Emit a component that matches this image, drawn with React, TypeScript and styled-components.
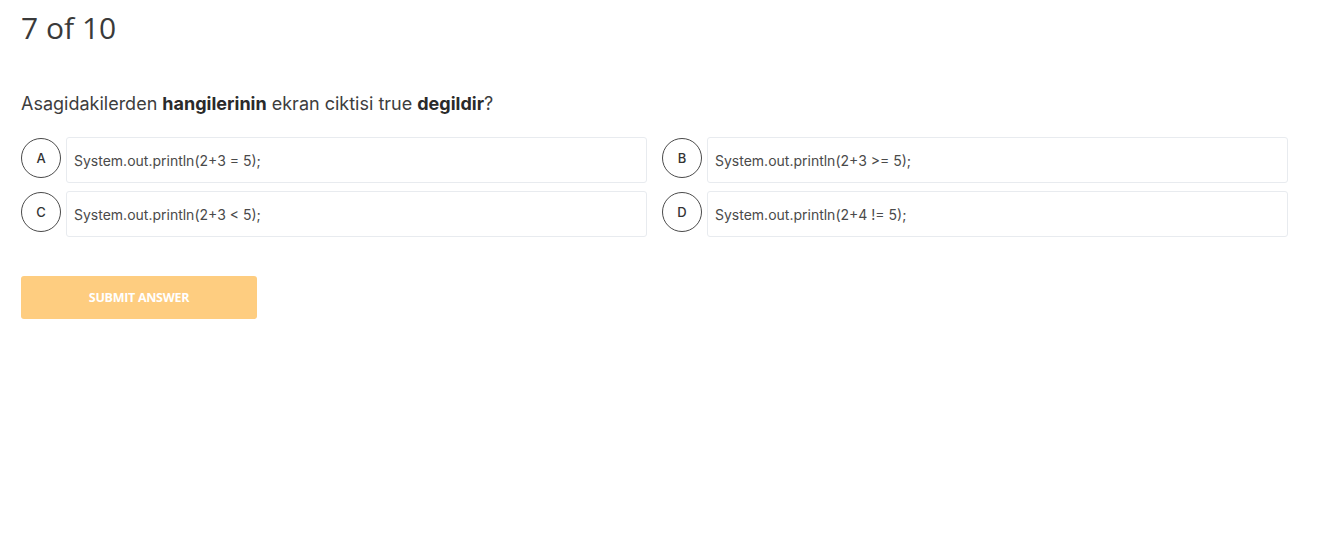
import styled, { createGlobalStyle } from "styled-components";

const GlobalStyle = createGlobalStyle`
  html, body {
    margin: 0;
    padding: 0;
    background: #ffffff;
  }
  body {
    font-family: Inter, "Noto Sans", sans-serif;
    color: #333;
  }
`;

const Page = styled.div`
  padding: 8px 51px 0 21px;
`;

const Counter = styled.h2`
  margin: 0;
  font-family: "Open Sans", sans-serif;
  font-weight: 400;
  font-size: 30px;
  line-height: 40px;
  color: #3a3a3a;
`;

const Question = styled.p`
  margin: 44px 0 0;
  font-size: 18px;
  line-height: 24px;
  color: #3d3d3d;

  b {
    font-weight: 700;
    color: #2a2a2a;
  }
`;

const Options = styled.div`
  display: grid;
  grid-template-columns: 1fr 1fr;
  column-gap: 15px;
  row-gap: 8px;
  margin-top: 21px;
`;

const Option = styled.label`
  display: flex;
  align-items: flex-start;
  gap: 5px;
  cursor: pointer;
`;

const Letter = styled.span`
  flex: none;
  width: 38px;
  height: 38px;
  margin-top: 1px;
  border: 1px solid #4a4a4a;
  border-radius: 50%;
  display: flex;
  align-items: center;
  justify-content: center;
  font-size: 13px;
  font-weight: 500;
  color: #333;
`;

const Answer = styled.div`
  flex: 1;
  height: 44px;
  border: 1px solid #e8ebef;
  border-radius: 3px;
  display: flex;
  align-items: center;
  padding: 0 7px;
  font-size: 14px;
  color: #4a4a4a;
`;

const Submit = styled.button`
  margin-top: 39px;
  width: 236px;
  height: 43px;
  border: none;
  border-radius: 3px;
  background: #fecd80;
  color: #fff;
  font-family: "Open Sans", sans-serif;
  font-weight: 700;
  font-size: 12.5px;
  letter-spacing: -0.3px;
  cursor: pointer;
`;

const options = [
  { key: "A", text: "System.out.println(2+3 = 5);" },
  { key: "B", text: "System.out.println(2+3 >= 5);" },
  { key: "C", text: "System.out.println(2+3 < 5);" },
  { key: "D", text: "System.out.println(2+4 != 5);" },
];

const App = () => {
  return (
    <>
      <GlobalStyle />
      <Page>
        <Counter>7 of 10</Counter>
        <Question>
          Asagidakilerden <b>hangilerinin</b> ekran ciktisi true <b>degildir</b>?
        </Question>
        <Options>
          {options.map((o) => (
            <Option key={o.key}>
              <Letter>{o.key}</Letter>
              <Answer>{o.text}</Answer>
            </Option>
          ))}
        </Options>
        <Submit>SUBMIT ANSWER</Submit>
      </Page>
    </>
  );
};

export default App;
